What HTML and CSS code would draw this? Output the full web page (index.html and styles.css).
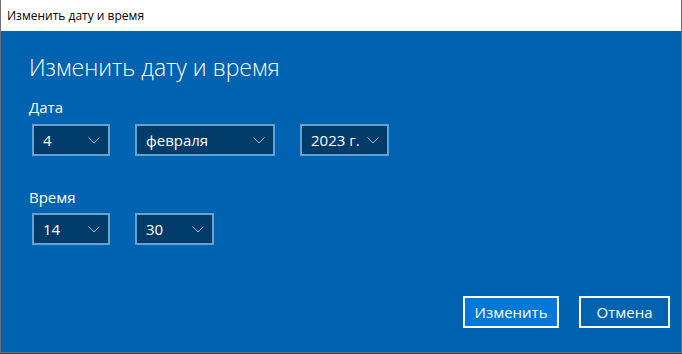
FILE: index.html
```html
<!DOCTYPE html>
<html lang="ru">
<head>
  <meta charset="UTF-8">
  <meta name="viewport" content="width=device-width,initial-scale=1">
  <title>Изменить дату и время</title>
  <link rel="stylesheet" href="styles.css">
</head>
<body>
  <div class="window">
    <div class="titlebar">Изменить дату и время</div>

    <main class="content">
      <h1 class="heading">Изменить дату и время</h1>

      <div class="field">
        <span class="field-label">Дата</span>
        <div class="row">
          <div class="combo combo-day"><span>4</span><svg class="chevron" viewBox="0 0 12 7" aria-hidden="true"><path d="M0.5 0.5 L6 6 L11.5 0.5"/></svg></div>
          <div class="combo combo-month"><span>февраля</span><svg class="chevron" viewBox="0 0 12 7" aria-hidden="true"><path d="M0.5 0.5 L6 6 L11.5 0.5"/></svg></div>
          <div class="combo combo-year"><span>2023 г.</span><svg class="chevron" viewBox="0 0 12 7" aria-hidden="true"><path d="M0.5 0.5 L6 6 L11.5 0.5"/></svg></div>
        </div>
      </div>

      <div class="field field-time">
        <span class="field-label">Время</span>
        <div class="row">
          <div class="combo combo-hour"><span>14</span><svg class="chevron" viewBox="0 0 12 7" aria-hidden="true"><path d="M0.5 0.5 L6 6 L11.5 0.5"/></svg></div>
          <div class="combo combo-minute"><span>30</span><svg class="chevron" viewBox="0 0 12 7" aria-hidden="true"><path d="M0.5 0.5 L6 6 L11.5 0.5"/></svg></div>
        </div>
      </div>

      <div class="actions">
        <button class="btn btn-primary">Изменить</button>
        <button class="btn">Отмена</button>
      </div>
    </main>
  </div>
</body>
</html>
```

FILE: styles.css
```css
:root { --accent: #0063b1; --accent-light: #0078d7; --combo-bg: #003b6a; --combo-border: #66a1d0; --chevron: #9fbcd6; --frame: #707070; }
* { box-sizing: border-box; }
body { margin: 0; background: #3c3c3c; font-family: "Open Sans", "Noto Sans", sans-serif; }
.window { width: 682px; height: 353px; display: flex; flex-direction: column; border: 1px solid var(--frame); border-top: 0; }
.titlebar { height: 31px; flex: none; background: #fff; color: #000; font-size: 12px; line-height: 31px; padding-left: 6px; }
.content { flex: 1; background: var(--accent); color: #fff; padding: 0 11px 0 28px; display: flex; flex-direction: column; }
.heading { margin: 21px 0 0; font-size: 23px; line-height: 31px; font-weight: 300; }
.field { display: flex; flex-direction: column; margin-top: 14px; }
.field-time { margin-top: 31px; }
.field-label { font-size: 15px; line-height: 20px; margin-bottom: 7px; }
.field-time .field-label { margin-bottom: 6px; }
.row { display: flex; gap: 25px; padding-left: 3px; }
.combo { height: 32px; display: flex; align-items: center; justify-content: space-between; padding: 0 8px 0 9px; background: var(--combo-bg); border: 2px solid var(--combo-border); font-size: 15px; }
.combo-day, .combo-hour { width: 78px; }
.combo-month { width: 140px; }
.combo-year { width: 89px; }
.combo-minute { width: 79px; }
.chevron { width: 12px; height: 7px; fill: none; stroke: var(--chevron); stroke-width: 1; }
.actions { margin-top: auto; margin-bottom: 24px; display: flex; justify-content: flex-end; gap: 20px; }
.btn { height: 32px; border: 2px solid #fff; background: var(--accent); color: #fff; font: inherit; font-size: 15px; padding: 0; width: 91px; }
.btn-primary { background: var(--accent-light); width: 96px; }
```
